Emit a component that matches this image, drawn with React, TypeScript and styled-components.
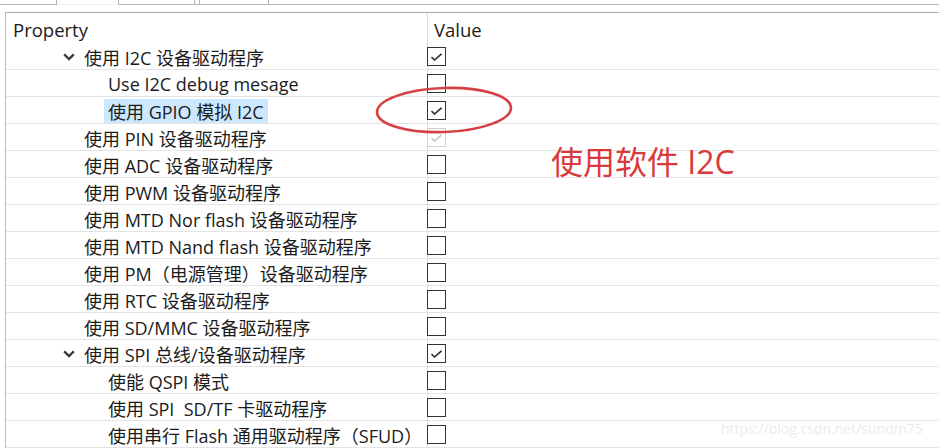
import React from "react";
import styled, { createGlobalStyle } from "styled-components";

const GlobalStyle = createGlobalStyle`
  html, body { margin: 0; padding: 0; background: #ffffff; }
  body {
    width: 939px;
    height: 448px;
    overflow: hidden;
    font-family: "Open Sans", "Noto Sans CJK SC", sans-serif;
    color: #1b1b1b;
  }
`;

const Page = styled.div`
  position: relative;
  width: 939px;
  height: 448px;
  overflow: hidden;
`;

const TabStrip = styled.div`
  display: flex;
  height: 5px;
  margin-bottom: 7px;
`;

const Tab = styled.div<{ $w?: number; $active?: boolean }>`
  flex: ${(p) => (p.$w ? `0 0 ${p.$w}px` : "1 1 auto")};
  box-sizing: border-box;
  border-right: 1px solid #b4b4b4;
  border-bottom: 1px solid ${(p) => (p.$active ? "#f1f1f1" : "#b4b4b4")};
  &:last-child { border-right: none; }
`;

const Panel = styled.div`
  margin-left: 5px;
  border-left: 1px solid #b9b9b9;
  border-top: 1px solid #a9a9a9;
`;

const Grid = styled.div`
  display: grid;
  grid-template-columns: 421px 1fr;
`;

const HeaderCell = styled.div<{ $value?: boolean }>`
  box-sizing: border-box;
  height: 30px;
  padding-top: 3px;
  display: flex;
  align-items: center;
  font-size: 18.5px;
  padding-left: ${(p) => (p.$value ? "6px" : "7px")};
  border-left: ${(p) => (p.$value ? "1px solid #dcdcdc" : "none")};
  color: #1b1b1b;
`;

const PropCell = styled.div<{ $indent: number }>`
  box-sizing: border-box;
  height: 27px;
  border-bottom: 1px solid #e4e4e4;
  display: flex;
  align-items: center;
  padding-left: ${(p) => p.$indent}px;
  font-size: 18px;
  white-space: pre;
  position: relative;
`;

const ValueCell = styled.div`
  box-sizing: border-box;
  height: 27px;
  border-bottom: 1px solid #e4e4e4;
  border-left: 1px solid #dcdcdc;
  display: flex;
  align-items: center;
`;

const Label = styled.span<{ $selected?: boolean }>`
  display: inline-flex;
  align-items: center;
  height: 24px;
  margin-top: 2px;
  padding: 0 4px;
  margin-left: -4px;
  background: ${(p) => (p.$selected ? "#cce8ff" : "transparent")};
`;

const Chevron = styled.svg`
  position: absolute;
  left: 57px;
  top: 10px;
  width: 12px;
  height: 8px;
`;

const Box = styled.div<{ $disabled?: boolean }>`
  box-sizing: border-box;
  width: 19px;
  height: 19px;
  margin-left: -1px;
  margin-top: 1px;
  border: 1px solid ${(p) => (p.$disabled ? "#cfcfcf" : "#333333")};
  background: #ffffff;
  display: flex;
  align-items: center;
  justify-content: center;
`;

const Ellipse = styled.svg`
  position: absolute;
  left: 370px;
  top: 82px;
  width: 150px;
  height: 58px;
  pointer-events: none;
`;

const Note = styled.div`
  position: absolute;
  left: 551px;
  top: 146px;
  font-size: 32px;
  line-height: 32px;
  color: #d83b3b;
  font-family: "Open Sans", "Noto Sans CJK SC", sans-serif;
  white-space: nowrap;
`;

const Watermark = styled.div`
  position: absolute;
  left: 721px;
  top: 420px;
  font-size: 14px;
  line-height: 18px;
  color: #ebebeb;
  font-family: "Open Sans", sans-serif;
  white-space: nowrap;
`;

type Row = {
  label: string;
  level: 1 | 2;
  expanded?: boolean;
  checked?: boolean;
  disabled?: boolean;
  selected?: boolean;
};

const rows: Row[] = [
  { label: "使用 I2C 设备驱动程序", level: 1, expanded: true, checked: true },
  { label: "Use I2C debug mesage", level: 2 },
  { label: "使用 GPIO 模拟 I2C", level: 2, checked: true, selected: true },
  { label: "使用 PIN 设备驱动程序", level: 1, checked: true, disabled: true },
  { label: "使用 ADC 设备驱动程序", level: 1 },
  { label: "使用 PWM 设备驱动程序", level: 1 },
  { label: "使用 MTD Nor flash 设备驱动程序", level: 1 },
  { label: "使用 MTD Nand flash 设备驱动程序", level: 1 },
  { label: "使用 PM（电源管理）设备驱动程序", level: 1 },
  { label: "使用 RTC 设备驱动程序", level: 1 },
  { label: "使用 SD/MMC 设备驱动程序", level: 1 },
  { label: "使用 SPI 总线/设备驱动程序", level: 1, expanded: true, checked: true },
  { label: "使能 QSPI 模式", level: 2 },
  { label: "使用 SPI  SD/TF 卡驱动程序", level: 2 },
  { label: "使用串行 Flash 通用驱动程序（SFUD）", level: 2 },
];

const Check: React.FC<{ disabled?: boolean }> = ({ disabled }) => (
  <svg width="13" height="10" viewBox="0 0 13 10">
    <path
      d="M1.5 5.2 L4.6 8 L11.5 1.8"
      fill="none"
      stroke={disabled ? "#c4c4c4" : "#2a2a2a"}
      strokeWidth="1.6"
    />
  </svg>
);

export default function App() {
  return (
    <Page>
      <GlobalStyle />
      <TabStrip>
        <Tab $w={57} />
        <Tab $w={62} $active />
        <Tab $w={76} />
        <Tab $w={5} />
        <Tab $w={69} />
        <Tab />
      </TabStrip>
      <Panel>
        <Grid>
          <HeaderCell>Property</HeaderCell>
          <HeaderCell $value>Value</HeaderCell>
          {rows.map((r, i) => (
            <React.Fragment key={i}>
              <PropCell $indent={r.level === 1 ? 78 : 102}>
                {r.expanded && (
                  <Chevron viewBox="0 0 12 8">
                    <path d="M1.2 1.4 L6 6 L10.8 1.4" fill="none" stroke="#3c3c3c" strokeWidth="2.4" />
                  </Chevron>
                )}
                <Label $selected={r.selected}>{r.label}</Label>
              </PropCell>
              <ValueCell>
                <Box $disabled={r.disabled}>{r.checked && <Check disabled={r.disabled} />}</Box>
              </ValueCell>
            </React.Fragment>
          ))}
        </Grid>
      </Panel>
      <Ellipse viewBox="0 0 150 58">
        <ellipse
          cx="74"
          cy="28"
          rx="67"
          ry="22"
          fill="none"
          stroke="#d64045"
          strokeWidth="2.6"
          transform="rotate(-2 74 28)"
        />
      </Ellipse>
      <Note>使用软件 I2C</Note>
      <Watermark>https://blog.csdn.net/sundm75</Watermark>
    </Page>
  );
}
